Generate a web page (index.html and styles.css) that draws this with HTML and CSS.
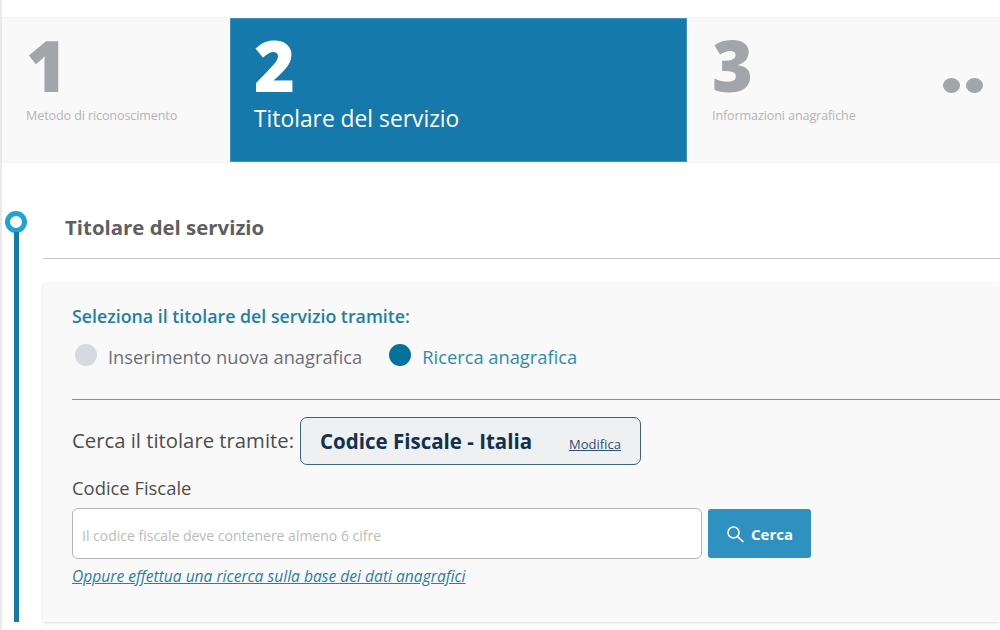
FILE: index.html
```html
<!DOCTYPE html>
<html lang="it">
<head>
<meta charset="utf-8">
<title>Titolare del servizio</title>
<link rel="stylesheet" href="styles.css">
</head>
<body>
<div class="page">
  <nav class="stepper">
    <div class="step step-one">
      <div class="step-num">1</div>
      <div class="step-label">Metodo di riconoscimento</div>
    </div>
    <div class="step step-active">
      <div class="step-num">2</div>
      <div class="step-label">Titolare del servizio</div>
    </div>
    <div class="step step-three">
      <div class="step-num">3</div>
      <div class="step-label">Informazioni anagrafiche</div>
    </div>
    <div class="step-more"><span class="dot"></span><span class="dot"></span></div>
  </nav>
  <div class="content">
    <div class="rail">
      <span class="rail-dot"></span>
      <span class="rail-line"></span>
    </div>
    <main class="main">
      <h2 class="section-title">Titolare del servizio</h2>
      <section class="card">
        <h3 class="card-title">Seleziona il titolare del servizio tramite:</h3>
        <div class="radios">
          <label class="radio"><span class="radio-mark"></span>Inserimento nuova anagrafica</label>
          <label class="radio radio-on"><span class="radio-mark"></span>Ricerca anagrafica</label>
        </div>
        <hr class="divider">
        <div class="search-by">
          <span class="search-by-label">Cerca il titolare tramite:</span>
          <div class="chosen">
            <strong class="chosen-name">Codice Fiscale - Italia</strong>
            <a class="chosen-edit" href="#">Modifica</a>
          </div>
        </div>
        <div class="field-label">Codice Fiscale</div>
        <div class="field-row">
          <input class="field-input" type="text" placeholder="Il codice fiscale deve contenere almeno 6 cifre">
          <button class="search-btn" type="button">
            <svg class="search-icon" viewBox="0 0 18 18" width="18" height="18" fill="none" stroke="currentColor" stroke-width="1.5" stroke-linecap="round"><circle cx="7.5" cy="7.5" r="5.5"/><path d="M11.6 11.6 17 16.6"/></svg>
            Cerca
          </button>
        </div>
        <a class="alt-link" href="#">Oppure effettua una ricerca sulla base dei dati anagrafici</a>
      </section>
    </main>
  </div>
</div>
</body>
</html>
```
FILE: styles.css
```css
* { box-sizing: border-box; }
html, body { margin: 0; height: 100%; background: #fff; overflow: hidden; }
body { font-family: "Open Sans", "Noto Sans", sans-serif; }
.page { height: 630px; border-left: 2px solid #e9e9e9; padding-top: 17px; }

.stepper { display: flex; height: 146px; background: #f9f9f9; border-top: 1px solid #f3f3f3; border-bottom: 1px solid #f3f3f3; }
.step { padding-top: 12px; }
.step-one { width: 228px; padding-left: 24px; }
.step-active { width: 457px; padding-left: 24px; background: #1679ab; color: #fff; box-shadow: inset 0 0 0 1px #3f93bd; }
.step-three { width: 256px; padding-left: 25px; }
.step-num { font-size: 70px; line-height: 70px; font-weight: 800; color: #a2a5a9; }
.step-active .step-num { color: #fff; }
.step-label { font-size: 12.6px; line-height: 16px; margin-top: 8px; color: #b4b4b4; letter-spacing: -.01em; }
.step-active .step-label { font-size: 22.8px; line-height: 30px; margin-top: 4px; color: #fff; letter-spacing: 0; }
.step-more { display: flex; gap: 6px; padding-top: 60px; }
.dot { width: 17px; height: 15px; border-radius: 50%; background: #a2a5a9; }

.content { display: flex; height: 411px; padding-top: 48px; }
.rail { width: 28px; height: 411px; display: flex; flex-direction: column; align-items: center; }
.rail-dot { width: 22px; height: 22px; border-radius: 50%; border: 5px solid #1ea3d8; background: #fff; flex: none; }
.rail-line { width: 5px; height: 390px; background: #1679ab; margin-top: -1px; }
.main { flex: 1; margin-left: 13px; min-width: 0; }

.section-title { margin: 0; padding: 2px 0 16px 22px; font-size: 20.4px; line-height: 28px; font-weight: 700; color: #5f5f5f; border-bottom: 1px solid #c9c9c9; height: 48px; }

.card { margin-top: 24px; height: 339px; background: #f9f9f9; padding: 21px 0 0 29px; box-shadow: 0 1px 3px rgba(0,0,0,.14); }
.card-title { margin: 0; font-size: 17.8px; line-height: 24px; font-weight: 600; color: #1f7fa6; }
.radios { display: flex; gap: 27px; margin-top: 16px; margin-left: 3px; }
.radio { display: flex; align-items: center; gap: 11px; font-size: 18.3px; line-height: 26px; color: #6a6f76; }
.radio-mark { width: 22px; height: 22px; margin-bottom: 4px; border-radius: 50%; background: #d6d9de; }
.radio-on { color: #2f8bb0; }
.radio-on .radio-mark { background: #05729c; }
.divider { margin: 29px 0 0; border: 0; border-top: 1px solid #8f8f8f; }

.search-by { display: flex; align-items: center; gap: 6px; margin-top: 17px; }
.search-by-label { font-size: 20.3px; line-height: 28px; margin-bottom: 2px; color: #4d4d4d; }
.chosen { display: flex; width: 341px; height: 48px; padding: 0 19px; align-items: center; justify-content: space-between; background: #eff0f2; border: 1px solid #3d6285; border-radius: 7px; }
.chosen-name { font-size: 20.5px; line-height: 26px; font-weight: 700; color: #12304f; }
.chosen-edit { font-size: 13px; line-height: 16px; color: #2c4d6e; margin-top: 6px; }

.field-label { font-size: 18.4px; line-height: 24px; color: #4d4d4d; margin-top: 11px; }
.field-row { display: flex; gap: 6px; align-items: flex-start; margin-top: 8px; }
.field-input { width: 630px; height: 51px; padding: 3px 9px 0; border: 1px solid #b5b5b5; border-radius: 6px; background: #fff; font: 14px "Open Sans", sans-serif; }
.field-input::placeholder { color: #bbb; opacity: 1; }
.search-btn { display: flex; align-items: center; justify-content: center; gap: 7px; width: 103px; height: 49px; padding: 0; margin-top: 1px; border: 0; border-radius: 3px; background: #2f91c0; color: #fff; font: 700 15px "Open Sans", sans-serif; }
.alt-link { display: block; margin-top: 7px; font-size: 15.6px; line-height: 20px; font-style: italic; color: #2a7ea8; }
```
